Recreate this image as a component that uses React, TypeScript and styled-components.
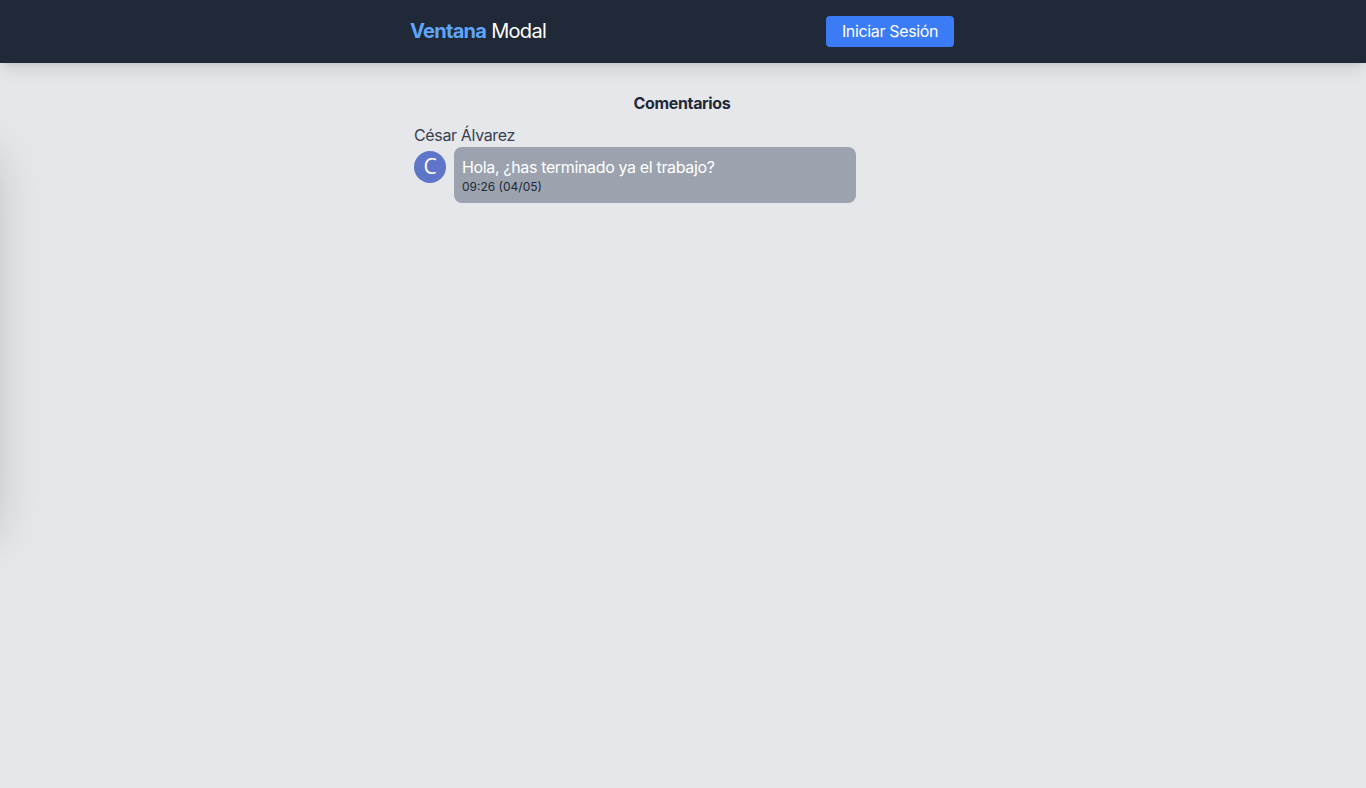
import React from "react";
import styled, { createGlobalStyle } from "styled-components";

const GlobalStyle = createGlobalStyle`
  html, body {
    margin: 0;
    padding: 0;
    background: #e5e7eb;
    font-family: Inter, "Noto Sans", "Liberation Sans", sans-serif;
    letter-spacing: -0.022em;
    overflow: hidden;
  }
  * { box-sizing: border-box; }
`;

const Page = styled.div`
  min-height: 788px;
  background: #e5e7eb;
  position: relative;
`;

const Header = styled.header`
  height: 63px;
  background: #1f2937;
  box-shadow: 0 10px 15px -3px rgba(0, 0, 0, 0.1), 0 4px 6px -4px rgba(0, 0, 0, 0.1);
  position: relative;
  z-index: 2;
`;

const HeaderInner = styled.div`
  max-width: 576px;
  margin: 0 auto;
  padding: 0 17px 1px 15px;
  height: 100%;
  display: flex;
  align-items: center;
  justify-content: space-between;
`;

const Logo = styled.div`
  font-size: 20px;
  line-height: 28px;
  color: #ffffff;
  letter-spacing: -0.035em;
`;

const LogoAccent = styled.span`
  color: #60a5fa;
  font-weight: 700;
`;

const LoginButton = styled.button`
  background: #3b7bf6;
  color: #ffffff;
  border: none;
  border-radius: 4px;
  font-family: inherit;
  letter-spacing: inherit;
  font-size: 16px;
  line-height: 24px;
  padding: 3px 0 4px;
  width: 128px;
  white-space: nowrap;
  cursor: pointer;
`;

const Main = styled.main`
  max-width: 576px;
  margin: 0 auto;
  padding: 28px 21px 0 19px;
`;

const Title = styled.h2`
  margin: 0;
  text-align: center;
  font-size: 16px;
  line-height: 24px;
  font-weight: 700;
  color: #1f2937;
`;

const Comment = styled.div`
  max-width: 442px;
  margin-top: 8px;
`;

const Author = styled.div`
  font-size: 16px;
  line-height: 24px;
  color: #374151;
`;

const Row = styled.div`
  display: flex;
  align-items: flex-start;
  gap: 8px;
`;

const Avatar = styled.div`
  flex: 0 0 32px;
  width: 32px;
  height: 32px;
  margin-top: 4px;
  border-radius: 50%;
  background: #5f76c8;
  color: #ffffff;
  display: flex;
  align-items: center;
  justify-content: center;
  font-family: "Open Sans", "Noto Sans", sans-serif;
  font-weight: 400;
  letter-spacing: 0;
  font-size: 21px;
  line-height: 1;
  padding-bottom: 1px;
`;

const Bubble = styled.div`
  flex: 1;
  background: #9ca3af;
  border-radius: 8px;
  padding: 8px 8px;
`;

const Message = styled.div`
  color: #ffffff;
  font-size: 16px;
  line-height: 24px;
`;

const Time = styled.div`
  color: #1f2937;
  font-size: 12px;
  line-height: 16px;
  letter-spacing: 0;
`;

const HiddenPanel = styled.aside`
  position: absolute;
  top: 120px;
  left: -320px;
  width: 320px;
  height: 400px;
  background: #ffffff;
  box-shadow: 0 25px 50px -12px rgba(0, 0, 0, 0.25);
`;

export default function App() {
  return (
    <Page>
      <GlobalStyle />
      <Header>
        <HeaderInner>
          <Logo>
            <LogoAccent>Ventana</LogoAccent> Modal
          </Logo>
          <LoginButton>Iniciar Sesión</LoginButton>
        </HeaderInner>
      </Header>
      <Main>
        <Title>Comentarios</Title>
        <Comment>
          <Author>César Álvarez</Author>
          <Row>
            <Avatar>C</Avatar>
            <Bubble>
              <Message>Hola, ¿has terminado ya el trabajo?</Message>
              <Time>09:26 (04/05)</Time>
            </Bubble>
          </Row>
        </Comment>
      </Main>
      <HiddenPanel />
    </Page>
  );
}
